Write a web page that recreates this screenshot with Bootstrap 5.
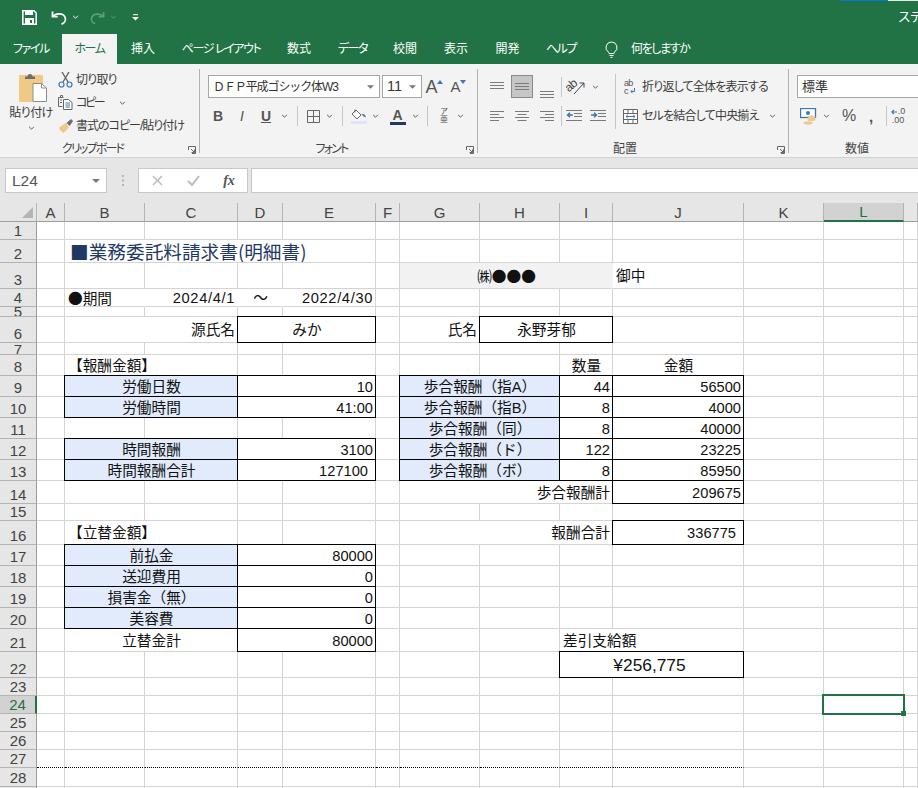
<!DOCTYPE html>
<html lang="ja">
<head>
    <meta charset="UTF-8">
    <meta name="viewport" content="width=device-width, initial-scale=1.0">
    <title>業務委託料請求書</title>
    <link href="https://cdn.jsdelivr.net/npm/bootstrap@5.3.0/dist/css/bootstrap.min.css" rel="stylesheet">
    <style>
        html, body { height: 788px; overflow: hidden; }
        body {
            background: #fff;
            font-family: "Liberation Sans", "Noto Sans CJK JP", sans-serif;
            color: #111;
        }
        svg { display: block; flex: none; }

        /* title bar + tabs */
        .xl-top { background: #217346; height: 64px; position: relative; color: #fff; font-size: 12px; font-feature-settings: "palt"; }
        .xl-qat { height: 34px; padding-left: 22px; }
        .ml5 { margin-left: 5px; } .ml11 { margin-left: 11px; } .ml14 { margin-left: 14px; } .ml15 { margin-left: 15px; }
        .doc-name { margin-left: auto; margin-right: -4px; font-size: 13px; white-space: nowrap; }
        .sign-blue { position: absolute; top: 0; left: 840px; width: 48px; height: 1px; background: #0078d7; }
        .sign-white { position: absolute; top: 0; left: 888px; width: 30px; height: 1px; background: #e8e8e8; }
        .xl-tabs { height: 30px; white-space: nowrap; }
        .xl-tab { height: 30px; line-height: 30px; text-align: center; flex: none; }
        .xl-tab-on { background: #f3f3f3; color: #217346; }
        .kn { letter-spacing: -1.4px; }
        .t55 { width: 55px; } .t62 { width: 62px; } .t52 { width: 52px; } .t104 { width: 104px; } .t50 { width: 50px; } .t51 { width: 51px; } .t56 { width: 56px; }
        .tell-me { margin-left: 16px; gap: 13px; }

        /* ribbon */
        .xl-ribbon { height: 94px; background: #f3f3f3; border-bottom: 1px solid #d2d2d2; overflow: hidden; font-size: 12px; color: #3c3c3c; font-feature-settings: "palt"; white-space: nowrap; letter-spacing: -.8px; }
        .rg { flex: none; }
        .rg-body { height: 75px; }
        .rg-label { height: 18px; line-height: 20px; text-align: center; position: relative; color: #444; letter-spacing: -1.8px; }
        .launch { position: absolute; right: 3px; top: 7px; }
        .rg-clip { width: 199px; } .rg-clip .rg-label { padding-right: 14px; }
        .rg-font { width: 277px; } .rg-font .rg-label { padding-right: 14px; }
        .rg-align { width: 310px; } .rg-align .rg-label { padding-right: 16px; letter-spacing: 0; }
        .rg-num { width: 136px; } .rg-num .rg-label { letter-spacing: 0; }
        .rg-sep { width: 1px; height: 84px; margin-top: 5px; background: #b1b1b1; flex: none; }
        .inner-sep { height: 55px; margin-top: 10px; background: #c6c6c6; }
        .sl { display: flex; align-items: center; justify-content: center; flex: none; }
        .s1 { width: 1px; } .s12 { width: 12px; } .s13 { width: 13px; } .s14 { width: 14px; } .s18 { width: 18px; } .s20 { width: 20px; } .s21 { width: 21px; } .s22 { width: 22px; } .s24 { width: 24px; } .s27 { width: 27px; } .s28 { width: 28px; } .s36 { width: 36px; }
        .v-sep { height: 20px; position: relative; }
        .v-sep::after { content: ""; width: 1px; height: 20px; background: #c6c6c6; }

        .paste-col { width: 42px; margin-left: 10px; padding-top: 8px; line-height: 1; flex: none; }
        .paste-col > svg:first-child { margin-left: 4px; }
        .paste-col .paste-txt { margin-top: 5px; margin-bottom: 7px; letter-spacing: -.5px; }
        .clip-col { margin-left: 6px; padding-top: 4px; }
        .clip-row { height: 23px; }
        .clip-row svg:first-child { margin-right: 3px; }
        .copy-txt { letter-spacing: -2.4px; }
        .fmt-txt { letter-spacing: -1px; }

        .rb-row1 { padding-top: 11px; height: 34px; }
        .rb-row2 { height: 22px; margin-top: 7px; }
        .fr2 { padding-left: 6px; }
        .combo { height: 23px; background: #fff; border: 1px solid #a6a6a6; display: flex; align-items: center; justify-content: space-between; padding: 0 5px 0 4px; flex: none; font-size: 12px; color: #333; letter-spacing: 0; }
        .combo-font { width: 172px; margin-left: 8px; margin-right: 2px; font-feature-settings: normal; letter-spacing: -1.1px; }
        .combo-size { width: 40px; font-family: "Liberation Sans", sans-serif; font-size: 14.5px; }
        .combo-num { width: 130px; margin-left: 8px; font-size: 13px; font-feature-settings: normal; }
        .glyph-big { font-size: 18px; color: #555; line-height: 1; }
        .glyph-small { font-size: 15px; color: #555; line-height: 1; }
        .up-tick { margin-bottom: 10px; }
        .biu { font-size: 14px; color: #555; font-family: "Liberation Sans", sans-serif; line-height: 1; letter-spacing: 0; }
        .font-col-bar { border-bottom: 3px solid #1f3864; width: 16px; text-align: center; font-size: 14px; font-weight: 700; line-height: 14px; color: #555; letter-spacing: 0; }
        .a-slot { padding-left: 5px; }
        .ruby-txt { font-size: 8px; line-height: 8px; color: #555; letter-spacing: 0; }
        .align-sel { width: 22px; height: 23px; background: #c6c6c6; border: 1px solid #8a8a8a; }
        .al-left { width: 137px; padding-left: 5px; flex: none; }
        .al-right { padding-left: 8px; }
        .al-row1 { height: 34px; padding-top: 11px; }
        .wrap-txt { margin-left: 6px; }
        .merge-ico { margin-left: -1px; }
        .merge-txt { margin-left: 4px; }
        .merge-chev { margin-left: 10px; }
        .num-row { padding-left: 11px; }
        .pct { font-size: 16px; color: #555; line-height: 1; letter-spacing: 0; }
        .comma { padding-right: 3px; font-size: 15px; }
        .dec-txt { font-size: 9px; line-height: 9px; color: #555; letter-spacing: 0; }
        .dec-top { gap: 1px; }

        /* formula bar */
        .xl-fbar { height: 45px; background: #e6e6e6; padding: 10px 0 10px 5px; }
        .fb-box { height: 25px; background: #fff; border: 1px solid #c8c8c8; }
        .name-box { width: 102px; padding: 0 6px; font-size: 15.5px; color: #555; }
        .grip { width: 31px; }
        .fx-box { width: 110px; margin-right: 3px; }
        .fx-txt { font-family: "Liberation Serif", serif; font-style: italic; font-weight: 700; font-size: 14px; color: #555; }
        .formula-in { flex: 1 1 auto; border-right: 0; }

        /* sheet */
        .sheet-wrap { overflow: hidden; }
        .xl-sheet { table-layout: fixed; border-collapse: separate; border-spacing: 0; width: 918px; font-size: 14.67px; line-height: 16px; }
        .c-rh { width: 37px; } .c-a { width: 28px; } .c-b { width: 80px; } .c-c { width: 93px; } .c-d { width: 45px; } .c-e { width: 93px; } .c-f { width: 24px; } .c-g { width: 80px; } .c-h { width: 80px; } .c-i { width: 53px; } .c-j { width: 131px; } .c-k { width: 80px; } .c-l { width: 80px; } .c-m { width: 14px; }
        .xl-sheet td, .xl-sheet th {
            padding: 0 2px 0 3px;
            border-right: 1px solid #d4d4d4;
            border-bottom: 1px solid #d4d4d4;
            vertical-align: middle;
            white-space: nowrap;
            overflow: hidden;
            font-weight: 400;
        }
        .xl-sheet td { padding-top: 1px; }
        .xl-sheet th { background: #e6e6e6; color: #444; text-align: center; border-right-color: #b4b4b4; border-bottom-color: #b4b4b4; padding: 0; font-size: 15px; vertical-align: bottom; }
        .xl-sheet thead th { height: 19px; border-bottom-color: #9e9e9e; }
        .xl-sheet tbody th { border-right-color: #9e9e9e; }
        .xl-sheet .corner { position: relative; }
        .corner-tri { position: absolute; right: 3px; bottom: 3px; width: 0; height: 0; border-left: 11px solid transparent; border-bottom: 11px solid #b4b4b4; }
        .xl-sheet .hd-on { background: #d2d2d2; color: #217346; }
        .xl-sheet thead .hd-on { border-bottom: 2px solid #217346; }
        .xl-sheet tbody .hd-on { border-right: 2px solid #217346; }
        .xl-sheet .nb { border-right-color: transparent; }
        .xl-sheet .dot { border-bottom: 1px dotted #000; }
        .xl-sheet .fl { background: #e1ebfb; }
        .xl-sheet .gy { background: #f2f2f2; border-right-color: #f2f2f2; }
        .xl-sheet .bx, .xl-sheet .sel { position: relative; overflow: visible; }
        .bx::after { content: ""; position: absolute; top: -1px; left: -1px; right: -1px; bottom: -1px; border: 1px solid #000; pointer-events: none; }
        .sel::after { content: ""; position: absolute; top: -2px; left: -2px; right: -2px; bottom: -2px; border: 2px solid #217346; z-index: 2; }
        .sel::before { content: ""; position: absolute; right: -3px; bottom: -3px; width: 5px; height: 5px; background: #217346; z-index: 3; }
        .xl-sheet .pe8 { padding-right: 7px; }
        .xl-sheet .dt { letter-spacing: .65px; }
        .cj { font-family: "Noto Sans CJK JP", sans-serif; }
        .xl-sheet .doc-title { font-size: 18.67px; color: #1f3864; padding-left: 5px; line-height: 22px; padding-top: 0; }
        .xl-sheet .pay-total { font-size: 17.33px; padding-right: 7px; }
        .r2 { height: 23px; } .r3 { height: 26px; } .r5 { height: 10px; } .r6 { height: 26px; } .r7 { height: 12px; } .r8 { height: 21px; }
        .r14 { height: 23px; } .r15 { height: 17px; } .r16 { height: 24px; } .r21 { height: 23px; } .r22 { height: 26px; } .rd { height: 18px; } .r28 { height: 19px; }
        .r5 th, .r7 th { line-height: 8px; }
    </style>
</head>
<body>
    <svg width="0" height="0" class="position-absolute">
        <symbol id="chev" viewBox="0 0 8 5"><path d="M1 1l3 3 3-3" fill="none" stroke="#555" stroke-width="1.2"/></symbol>
        <symbol id="tri" viewBox="0 0 8 4"><path d="M0 0h8L4 4z" fill="#777"/></symbol>
        <symbol id="launcher" viewBox="0 0 8 8"><path d="M.5 4V.5h7v7H4M3 3l3.5 3.5M6.5 3.5v3h-3" fill="none" stroke="#666"/></symbol>
    </svg>

    <!-- title bar and tabs -->
    <div class="xl-top">
        <div class="sign-blue"></div>
        <div class="sign-white"></div>
        <div class="xl-qat d-flex align-items-center">
            <svg width="15" height="15" viewBox="0 0 15 15"><path d="M.8.8h11.2l2.2 2.2v11.2H.8z" fill="none" stroke="#fff" stroke-width="1.6"/><rect x="3" y="1" width="8" height="4" fill="#fff"/><rect x="3" y="8" width="9" height="6" fill="#fff"/><rect x="8" y="10" width="2" height="3" fill="#217346"/></svg>
            <svg class="ml14" width="16" height="15" viewBox="0 0 16 15"><path d="M1.5 1.5v5.2h5.2" fill="none" stroke="#fff" stroke-width="1.8"/><path d="M2 6.5C5 2.5 13 3 14.3 8c.6 2.8-1.2 5.4-3.8 6" fill="none" stroke="#fff" stroke-width="1.8"/></svg>
            <svg class="ml5" width="7" height="4" viewBox="0 0 8 5"><path d="M1 1l3 3 3-3" fill="none" stroke="#fff" stroke-width="1.2"/></svg>
            <svg class="ml11" width="15" height="15" viewBox="0 0 16 15"><path d="M14.5 1.5v5.2H9.3" fill="none" stroke="#5f9d7f" stroke-width="1.8"/><path d="M14 6.5C11 2.5 3 3 1.7 8c-.6 2.8 1.2 5.4 3.8 6" fill="none" stroke="#5f9d7f" stroke-width="1.8"/></svg>
            <svg class="ml5" width="7" height="4" viewBox="0 0 8 5"><path d="M1 1l3 3 3-3" fill="none" stroke="#5f9d7f" stroke-width="1.2"/></svg>
            <svg class="ml15" width="7" height="7" viewBox="0 0 7 7"><path d="M1 .7h5" stroke="#fff"/><path d="M0 3h7L3.5 6.6z" fill="#fff"/></svg>
            <span class="doc-name">ステ</span>
        </div>
        <div class="xl-tabs d-flex">
            <div class="xl-tab t62 kn">ファイル</div>
            <div class="xl-tab t55 kn xl-tab-on">ホーム</div>
            <div class="xl-tab t52">挿入</div>
            <div class="xl-tab t104 kn">ページ レイアウト</div>
            <div class="xl-tab t52">数式</div>
            <div class="xl-tab t55 kn">データ</div>
            <div class="xl-tab t50">校閲</div>
            <div class="xl-tab t52">表示</div>
            <div class="xl-tab t51">開発</div>
            <div class="xl-tab t56 kn">ヘルプ</div>
            <div class="d-flex align-items-center tell-me">
                <svg width="13" height="17" viewBox="0 0 13 17"><path d="M6.5 1a5.5 5.5 0 0 0-3.2 10c.6.5.7 1 .7 1.6h5c0-.6.1-1.1.7-1.6A5.5 5.5 0 0 0 6.5 1z" fill="none" stroke="#fff"/><path d="M4.5 14.5h4M5.5 16.3h2" stroke="#fff"/></svg>
                <span class="kn">何をしますか</span>
            </div>
        </div>
    </div>

    <!-- ribbon -->
    <div class="xl-ribbon d-flex">
        <section class="rg rg-clip">
            <div class="rg-body d-flex">
                <div class="paste-col d-flex flex-column align-items-center">
                    <svg width="28" height="30" viewBox="0 0 28 30"><rect x="0" y="3" width="24" height="27" rx="1" fill="#f0c987"/><path d="M6 7V4.5h2.5a2.5 2.5 0 0 1 5 0H16V7z" fill="#6e6e6e"/><path d="M14 11.500h8.500L27.500 16v13.500H14z" fill="#fff" stroke="#8c8c8c"/><path d="M22.500 11.500V16h5" fill="none" stroke="#8c8c8c"/></svg>
                    <div class="paste-txt">貼り付け</div>
                    <svg width="7" height="4"><use href="#chev"/></svg>
                </div>
                <div class="clip-col">
                    <div class="clip-row d-flex align-items-center">
                        <svg width="15" height="16" viewBox="0 0 15 16"><path d="M4 0l6 10M11 0L5 10" stroke="#666" stroke-width="1.4"/><circle cx="3.500" cy="12.500" r="2.500" fill="none" stroke="#3a78b5" stroke-width="1.200"/><circle cx="11.500" cy="12.500" r="2.500" fill="none" stroke="#3a78b5" stroke-width="1.200"/></svg>
                        <span>切り取り</span>
                    </div>
                    <div class="clip-row d-flex align-items-center">
                        <svg width="15" height="15" viewBox="0 0 15 15"><path d="M5.500 2.500h-5v9h4" fill="none" stroke="#666"/><path d="M2.500 2.500V.5h2v2M2 5h2M2 7.500h2" stroke="#666" fill="none"/><path d="M5.500 4.500h5l3.500 3v7h-8.500z" fill="#fff" stroke="#666"/><path d="M7.500 8h4.500M7.500 10h4.500M7.500 12h4.500" stroke="#3a78b5"/></svg>
                        <span class="copy-txt">コピー</span>
                        <svg class="ms-3" width="7" height="4"><use href="#chev"/></svg>
                    </div>
                    <div class="clip-row d-flex align-items-center">
                        <svg width="15" height="14" viewBox="0 0 15 14"><path d="M1 8.500L8 4l3 4.500L5.500 14C3.500 13 1.500 11 1 8.500z" fill="#f0c987"/><path d="M8.500 4l4.500-4 2 2-3.300 5z" fill="#6e6e6e"/></svg>
                        <span class="fmt-txt">書式のコピー/貼り付け</span>
                    </div>
                </div>
            </div>
            <div class="rg-label">クリップボード<svg class="launch" width="8" height="8"><use href="#launcher"/></svg></div>
        </section>
        <div class="rg-sep"></div>

        <section class="rg rg-font">
            <div class="rg-body">
                <div class="rb-row1 d-flex">
                    <div class="combo combo-font"><span>ＤＦＰ平成ゴシック体W3</span><svg width="7" height="4"><use href="#tri"/></svg></div>
                    <div class="combo combo-size"><span>11</span><svg width="7" height="4"><use href="#tri"/></svg></div>
                    <div class="sl s24">
                        <span class="glyph-big">A</span>
                        <svg class="up-tick" width="6" height="4" viewBox="0 0 6 4"><path d="M0 4L3 0l3 4z" fill="#3a78b5"/></svg>
                    </div>
                    <div class="sl s24">
                        <span class="glyph-small">A</span>
                        <svg class="up-tick" width="6" height="4" viewBox="0 0 6 4"><path d="M0 0l3 4 3-4z" fill="#3a78b5"/></svg>
                    </div>
                </div>
                <div class="rb-row2 d-flex align-items-center fr2">
                    <div class="sl s24 biu fw-bold">B</div>
                    <div class="sl s24 biu fst-italic">I</div>
                    <div class="sl s24 biu fw-bold text-decoration-underline">U</div>
                    <div class="sl s13"><svg width="7" height="4"><use href="#chev"/></svg></div>
                    <div class="sl s13 v-sep"></div>
                    <div class="sl s18"><svg width="13" height="13" viewBox="0 0 13 13"><path d="M.5.5h12v12H.5zM6.500.5v12M.5 6.500h12" fill="none" stroke="#666"/></svg></div>
                    <div class="sl s14"><svg width="7" height="4"><use href="#chev"/></svg></div>
                    <div class="sl s12 v-sep"></div>
                    <div class="sl s21"><svg width="16" height="15" viewBox="0 0 16 15"><rect x="0" y="12" width="16" height="3" fill="#dce6f7"/><path d="M5 1l5 5-4 4-5-5z" fill="#fff" stroke="#666"/><path d="M4 .5v3" stroke="#666"/><path d="M10.500 5c2-.5 4 .5 4.500 3.500-1.500-.5-3-1-4.500-3.500z" fill="#3a78b5"/></svg></div>
                    <div class="sl s12"><svg width="7" height="4"><use href="#chev"/></svg></div>
                    <div class="sl s28 a-slot"><div class="font-col-bar">A</div></div>
                    <div class="sl s12"><svg width="7" height="4"><use href="#chev"/></svg></div>
                    <div class="sl s13 v-sep"></div>
                    <div class="sl s20 flex-column ruby-txt"><span>ア</span><span>亜</span></div>
                    <div class="sl s13"><svg width="7" height="4"><use href="#chev"/></svg></div>
                </div>
            </div>
            <div class="rg-label">フォント<svg class="launch" width="8" height="8"><use href="#launcher"/></svg></div>
        </section>
        <div class="rg-sep"></div>

        <section class="rg rg-align">
            <div class="rg-body d-flex">
                <div class="al-left">
                    <div class="al-row1 d-flex align-items-center">
                        <div class="sl s28"><svg width="14" height="9" viewBox="0 0 14 9"><path d="M0 .5h14M0 3.500h14M0 6.500h14" stroke="#7a7a7a"/></svg></div>
                        <div class="sl align-sel"><svg width="14" height="9" viewBox="0 0 14 9"><path d="M0 1.500h14M0 4.500h14M0 7.500h14" stroke="#7a7a7a"/></svg></div>
                        <div class="sl s28"><svg class="mt-3" width="14" height="9" viewBox="0 0 14 9"><path d="M0 1.500h14M0 4.500h14M0 7.500h14" stroke="#7a7a7a"/></svg></div>
                        <div class="sl s1 v-sep"></div>
                        <div class="sl s27"><svg width="20" height="20" viewBox="0 0 20 20"><text x="0" y="12" font-size="12" font-family="Liberation Sans" fill="#444" transform="rotate(-40 6 10)">ab</text><path d="M8 17L18 6M13.500 6H18v4.500" fill="none" stroke="#444"/></svg></div>
                        <div class="sl s13"><svg width="7" height="4"><use href="#chev"/></svg></div>
                    </div>
                    <div class="rb-row2 d-flex align-items-center">
                        <div class="sl s28"><svg width="14" height="11" viewBox="0 0 14 11"><path d="M0 .5h14M0 3.500h9M0 6.500h14M0 9.500h9" stroke="#7a7a7a"/></svg></div>
                        <div class="sl s22"><svg width="14" height="11" viewBox="0 0 14 11"><path d="M0 .5h14M2.500 3.500h9M0 6.500h14M2.500 9.500h9" stroke="#7a7a7a"/></svg></div>
                        <div class="sl s28"><svg width="14" height="11" viewBox="0 0 14 11"><path d="M0 .5h14M5 3.500h9M0 6.500h14M5 9.500h9" stroke="#7a7a7a"/></svg></div>
                        <div class="sl s1 v-sep"></div>
                        <div class="sl s24"><svg width="16" height="12" viewBox="0 0 16 12"><path d="M0 .5h16M8 3.500h8M8 6.500h8M0 10.500h16" stroke="#7a7a7a"/><path d="M7 5H2M4 2.800L1.500 5 4 7.200" fill="none" stroke="#3a78b5" stroke-width="1.500"/></svg></div>
                        <div class="sl s24"><svg width="16" height="12" viewBox="0 0 16 12"><path d="M0 .5h16M8 3.500h8M8 6.500h8M0 10.500h16" stroke="#7a7a7a"/><path d="M1 5h5M4 2.800L6.500 5 4 7.200" fill="none" stroke="#3a78b5" stroke-width="1.500"/></svg></div>
                    </div>
                </div>
                <div class="rg-sep inner-sep"></div>
                <div class="al-right">
                    <div class="al-row1 d-flex align-items-center">
                        <svg width="12" height="16" viewBox="0 0 12 16"><text x="0" y="7" font-size="9" font-family="Liberation Sans" fill="#555">ab</text><text x="0" y="15" font-size="9" font-family="Liberation Sans" fill="#555">c</text><path d="M10.500 9v3.500H7M8.500 11L6.800 12.500 8.500 14" fill="none" stroke="#3a78b5"/></svg>
                        <span class="wrap-txt">折り返して全体を表示する</span>
                    </div>
                    <div class="rb-row2 d-flex align-items-center">
                        <svg class="merge-ico" width="15" height="15" viewBox="0 0 15 15"><path d="M.5.5h14v14H.5zM.5 4.500h14M.5 10.500h14M5 .5v4M10 .5v4M5 10.500v4M10 10.500v4" fill="#fff" stroke="#666"/><path d="M3 7.500h9M4.800 5.800L3 7.500l1.800 1.700M10.200 5.800L12 7.500l-1.800 1.700" fill="none" stroke="#3a78b5"/></svg>
                        <span class="merge-txt">セルを結合して中央揃え</span>
                        <svg class="merge-chev" width="7" height="4"><use href="#chev"/></svg>
                    </div>
                </div>
            </div>
            <div class="rg-label">配置<svg class="launch" width="8" height="8"><use href="#launcher"/></svg></div>
        </section>
        <div class="rg-sep"></div>

        <section class="rg rg-num">
            <div class="rg-body">
                <div class="rb-row1 d-flex"><div class="combo combo-num"><span>標準</span></div></div>
                <div class="rb-row2 d-flex align-items-center num-row">
                    <svg width="17" height="17" viewBox="0 0 17 17"><rect x=".5" y=".5" width="15" height="9" fill="#fff" stroke="#3a78b5" stroke-width="1.300"/><circle cx="8" cy="5" r="2" fill="#3a78b5"/><ellipse cx="11.500" cy="9" rx="4" ry="1.500" fill="#f0c987"/><ellipse cx="11.500" cy="11.500" rx="4" ry="1.500" fill="#f0c987"/><ellipse cx="8" cy="15" rx="4.500" ry="1.700" fill="#f0c987"/></svg>
                    <div class="sl s18"><svg width="7" height="4"><use href="#chev"/></svg></div>
                    <div class="sl s20 pct ms-1">%</div>
                    <div class="sl s27 pct comma fw-bold">,</div>
                    <div class="sl s1 v-sep"></div>
                    <div class="sl s22 dec-txt flex-column">
                        <div class="d-flex align-items-center dec-top"><svg width="6" height="6" viewBox="0 0 6 6"><path d="M6 3H1M3 .8L.8 3 3 5.200" fill="none" stroke="#3a78b5" stroke-width="1.200"/></svg><span>.0</span></div>
                        <span>.00</span>
                    </div>
                </div>
            </div>
            <div class="rg-label">数値</div>
        </section>
    </div>

    <!-- name box and formula bar -->
    <div class="xl-fbar d-flex">
        <div class="fb-box name-box d-flex align-items-center justify-content-between"><span>L24</span><svg width="8" height="4"><use href="#tri"/></svg></div>
        <div class="grip d-flex justify-content-center align-items-center"><svg width="2" height="11" viewBox="0 0 2 11"><path d="M0 0h2v2H0zM0 4.500h2v2H0zM0 9h2v2H0z" fill="#b4b4b4"/></svg></div>
        <div class="fb-box fx-box d-flex align-items-center">
            <div class="sl s36"><svg width="11" height="11" viewBox="0 0 11 11"><path d="M1 1l9 9M10 1l-9 9" stroke="#bcbcbc" stroke-width="1.500"/></svg></div>
            <div class="sl s36"><svg width="13" height="11" viewBox="0 0 13 11"><path d="M1 6l4 4 7-9" fill="none" stroke="#bcbcbc" stroke-width="2"/></svg></div>
            <div class="sl s36 fx-txt">fx</div>
        </div>
        <div class="fb-box formula-in"></div>
    </div>

    <!-- worksheet -->
    <div class="sheet-wrap">
        <table class="xl-sheet">
            <colgroup>
                <col class="c-rh"><col class="c-a"><col class="c-b"><col class="c-c"><col class="c-d"><col class="c-e"><col class="c-f"><col class="c-g"><col class="c-h"><col class="c-i"><col class="c-j"><col class="c-k"><col class="c-l"><col class="c-m">
            </colgroup>
            <thead>
                <tr><th class="corner"><span class="corner-tri"></span></th><th>A</th><th>B</th><th>C</th><th>D</th><th>E</th><th>F</th><th>G</th><th>H</th><th>I</th><th>J</th><th>K</th><th class="hd-on">L</th><th></th></tr>
            </thead>
            <tbody>
                <tr class="rd"><th>1</th><td></td><td></td><td></td><td></td><td></td><td></td><td></td><td></td><td></td><td></td><td></td><td></td><td></td></tr>
                <tr class="r2"><th>2</th><td></td><td colspan="4" class="doc-title cj">■業務委託料請求書(明細書)</td><td></td><td></td><td></td><td></td><td></td><td></td><td></td><td></td></tr>
                <tr class="r3"><th>3</th><td></td><td></td><td></td><td></td><td></td><td></td><td colspan="3" class="gy text-center cj">㈱●●●</td><td>御中</td><td></td><td></td><td></td></tr>
                <tr class="rd"><th>4</th><td></td><td class="nb cj">●期間</td><td class="nb text-end dt">2024/4/1</td><td class="nb text-center">～</td><td class="text-end dt">2022/4/30</td><td></td><td></td><td></td><td></td><td></td><td></td><td></td><td></td></tr>
                <tr class="r5"><th>5</th><td></td><td></td><td></td><td></td><td></td><td></td><td></td><td></td><td></td><td></td><td></td><td></td><td></td></tr>
                <tr class="r6"><th>6</th><td></td><td colspan="2" class="text-end">源氏名</td><td colspan="2" class="bx text-center">みか</td><td></td><td class="text-end">氏名</td><td colspan="2" class="bx text-center">永野芽郁</td><td></td><td></td><td></td><td></td></tr>
                <tr class="r7"><th>7</th><td></td><td></td><td></td><td></td><td></td><td></td><td></td><td></td><td></td><td></td><td></td><td></td><td></td></tr>
                <tr class="r8"><th>8</th><td></td><td colspan="2">【報酬金額】</td><td></td><td></td><td></td><td></td><td></td><td class="text-center">数量</td><td class="text-center">金額</td><td></td><td></td><td></td></tr>
                <tr class="r8"><th>9</th><td></td><td colspan="2" class="bx fl text-center">労働日数</td><td colspan="2" class="bx text-end">10</td><td></td><td colspan="2" class="bx fl text-center">歩合報酬（指A）</td><td class="bx text-end">44</td><td class="bx text-end">56500</td><td></td><td></td><td></td></tr>
                <tr class="r8"><th>10</th><td></td><td colspan="2" class="bx fl text-center">労働時間</td><td colspan="2" class="bx text-end">41:00</td><td></td><td colspan="2" class="bx fl text-center">歩合報酬（指B）</td><td class="bx text-end">8</td><td class="bx text-end">4000</td><td></td><td></td><td></td></tr>
                <tr class="r8"><th>11</th><td></td><td></td><td></td><td></td><td></td><td></td><td colspan="2" class="bx fl text-center">歩合報酬（同）</td><td class="bx text-end">8</td><td class="bx text-end">40000</td><td></td><td></td><td></td></tr>
                <tr class="r8"><th>12</th><td></td><td colspan="2" class="bx fl text-center">時間報酬</td><td colspan="2" class="bx text-end">3100</td><td></td><td colspan="2" class="bx fl text-center">歩合報酬（ド）</td><td class="bx text-end">122</td><td class="bx text-end">23225</td><td></td><td></td><td></td></tr>
                <tr class="r8"><th>13</th><td></td><td colspan="2" class="bx fl text-center">時間報酬合計</td><td colspan="2" class="bx text-end pe8">127100</td><td></td><td colspan="2" class="bx fl text-center">歩合報酬（ボ）</td><td class="bx text-end">8</td><td class="bx text-end">85950</td><td></td><td></td><td></td></tr>
                <tr class="r14"><th>14</th><td></td><td></td><td></td><td></td><td></td><td></td><td colspan="3" class="text-end">歩合報酬計</td><td class="bx text-end">209675</td><td></td><td></td><td></td></tr>
                <tr class="r15"><th>15</th><td></td><td></td><td></td><td></td><td></td><td></td><td></td><td></td><td></td><td></td><td></td><td></td><td></td></tr>
                <tr class="r16"><th>16</th><td></td><td colspan="2">【立替金額】</td><td></td><td></td><td></td><td colspan="3" class="text-end">報酬合計</td><td class="bx text-end pe8">336775</td><td></td><td></td><td></td></tr>
                <tr class="r8"><th>17</th><td></td><td colspan="2" class="bx fl text-center">前払金</td><td colspan="2" class="bx text-end">80000</td><td></td><td></td><td></td><td></td><td></td><td></td><td></td><td></td></tr>
                <tr class="r8"><th>18</th><td></td><td colspan="2" class="bx fl text-center">送迎費用</td><td colspan="2" class="bx text-end">0</td><td></td><td></td><td></td><td></td><td></td><td></td><td></td><td></td></tr>
                <tr class="r8"><th>19</th><td></td><td colspan="2" class="bx fl text-center">損害金（無）</td><td colspan="2" class="bx text-end">0</td><td></td><td></td><td></td><td></td><td></td><td></td><td></td><td></td></tr>
                <tr class="r8"><th>20</th><td></td><td colspan="2" class="bx fl text-center">美容費</td><td colspan="2" class="bx text-end">0</td><td></td><td></td><td></td><td></td><td></td><td></td><td></td><td></td></tr>
                <tr class="r21"><th>21</th><td></td><td colspan="2" class="text-center">立替金計</td><td colspan="2" class="bx text-end">80000</td><td></td><td></td><td></td><td colspan="2">差引支給額</td><td></td><td></td><td></td></tr>
                <tr class="r22"><th>22</th><td></td><td></td><td></td><td></td><td></td><td></td><td></td><td></td><td colspan="2" class="bx text-center pay-total">¥256,775</td><td></td><td></td><td></td></tr>
                <tr class="rd"><th>23</th><td></td><td></td><td></td><td></td><td></td><td></td><td></td><td></td><td></td><td></td><td></td><td></td><td></td></tr>
                <tr class="rd"><th class="hd-on">24</th><td></td><td></td><td></td><td></td><td></td><td></td><td></td><td></td><td></td><td></td><td></td><td class="sel"></td><td></td></tr>
                <tr class="rd"><th>25</th><td></td><td></td><td></td><td></td><td></td><td></td><td></td><td></td><td></td><td></td><td></td><td></td><td></td></tr>
                <tr class="rd"><th>26</th><td></td><td></td><td></td><td></td><td></td><td></td><td></td><td></td><td></td><td></td><td></td><td></td><td></td></tr>
                <tr class="rd"><th>27</th><td class="dot"></td><td class="dot"></td><td class="dot"></td><td class="dot"></td><td class="dot"></td><td class="dot"></td><td class="dot"></td><td class="dot"></td><td class="dot"></td><td class="dot"></td><td></td><td></td><td></td></tr>
                <tr class="r28"><th>28</th><td></td><td></td><td></td><td></td><td></td><td></td><td></td><td></td><td></td><td></td><td></td><td></td><td></td></tr>
                <tr class="rd"><th>29</th><td></td><td></td><td></td><td></td><td></td><td></td><td></td><td></td><td></td><td></td><td></td><td></td><td></td></tr>
            </tbody>
        </table>
    </div>

    <script src="https://cdn.jsdelivr.net/npm/bootstrap@5.3.0/dist/js/bootstrap.bundle.min.js"></script>
</body>
</html>
